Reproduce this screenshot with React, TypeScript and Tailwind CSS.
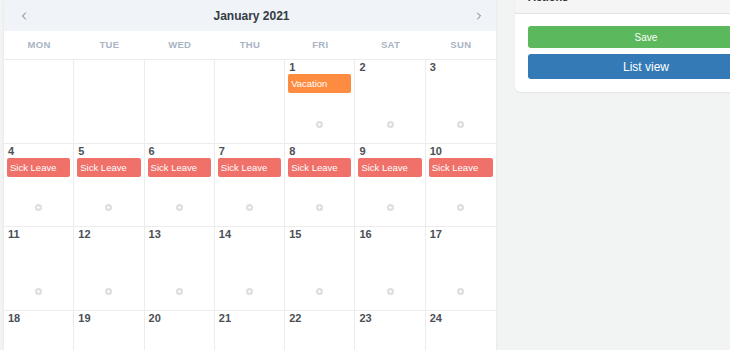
import { ChevronLeft, ChevronRight } from 'lucide-react';

type Event = { label: string; kind: 'vacation' | 'sick' };

const dayNames = ['MON', 'TUE', 'WED', 'THU', 'FRI', 'SAT', 'SUN'];

const weeks: (number | null)[][] = [
  [null, null, null, null, 1, 2, 3],
  [4, 5, 6, 7, 8, 9, 10],
  [11, 12, 13, 14, 15, 16, 17],
  [18, 19, 20, 21, 22, 23, 24],
];

const events: Record<number, Event> = {
  1: { label: 'Vacation', kind: 'vacation' },
  4: { label: 'Sick Leave', kind: 'sick' },
  5: { label: 'Sick Leave', kind: 'sick' },
  6: { label: 'Sick Leave', kind: 'sick' },
  7: { label: 'Sick Leave', kind: 'sick' },
  8: { label: 'Sick Leave', kind: 'sick' },
  9: { label: 'Sick Leave', kind: 'sick' },
  10: { label: 'Sick Leave', kind: 'sick' },
};

function AddDot() {
  return (
    <svg width="7" height="7" viewBox="0 0 7 7" className="block">
      <circle cx="3.5" cy="3.5" r="3.5" fill="#dedede" />
      <path d="M3.5 1.8v3.4M1.8 3.5h3.4" stroke="#ffffff" strokeWidth="1" />
    </svg>
  );
}

function DayCell({ day, last }: { day: number | null; last: boolean }) {
  const ev = day ? events[day] : undefined;
  return (
    <div className={`flex flex-col h-full ${last ? '' : 'border-r border-[#ececec]'}`}>
      {day && (
        <>
          <div className="pl-[4px] pt-[1px] text-[11px] leading-[12px] font-bold text-[#4b4f56]">{day}</div>
          {ev && (
            <div
              className={`mx-[3px] mt-[1px] h-[19px] rounded-[2px] px-[3px] text-[9.5px] leading-[19px] text-white ${
                ev.kind === 'vacation' ? 'bg-[#fd8b40]' : 'bg-[#f0716a]'
              }`}
            >
              {ev.label}
            </div>
          )}
          <div className="mt-auto mb-[15px] self-center">
            <AddDot />
          </div>
        </>
      )}
    </div>
  );
}

export default function App() {
  return (
    <div
      className="h-[350px] w-[730px] overflow-hidden bg-[#f2f3f3] flex items-start"
      style={{ fontFamily: '"Liberation Sans", Arial, sans-serif' }}
    >
      <div className="ml-[4px] mt-[-3px] w-[492px] shrink-0 rounded-md bg-white shadow-[0_1px_3px_rgba(0,0,0,0.08)] overflow-hidden">
        <div className="h-[34px] bg-[#f0f3f7] flex items-center justify-between pl-[14px] pr-[11px] pt-[3px]">
          <ChevronLeft size={12} strokeWidth={2} className="text-[#6d7785]" />
          <div className="text-[12px] font-bold text-[#353b45]">January 2021</div>
          <ChevronRight size={12} strokeWidth={2} className="text-[#6d7785]" />
        </div>
        <div className="grid grid-cols-7 h-[29px] border-b border-[#ececec]">
          {dayNames.map((d) => (
            <div key={d} className="flex items-center justify-center text-[9.5px] font-bold tracking-[0.3px] text-[#a9b4c4]">
              {d}
            </div>
          ))}
        </div>
        {weeks.map((week, wi) => (
          <div key={wi} className="grid grid-cols-7 h-[83.5px] border-b border-[#ececec]">
            {week.map((day, di) => (
              <DayCell key={di} day={day} last={di === 6} />
            ))}
          </div>
        ))}
      </div>

      <div className="ml-[19px] mt-[-21px] w-[262px] shrink-0 rounded-md bg-white shadow-[0_1px_2px_rgba(0,0,0,0.06)] overflow-hidden">
        <div className="h-[35px] bg-[#f5f5f5] border-b border-[#e3e3e3] flex items-end pb-[10px] px-[13px] text-[11px] leading-[11px] font-bold text-[#333]">
          Actions
        </div>
        <div className="px-[13px] pt-[12px] pb-[13px] flex flex-col gap-[6px]">
          <button className="h-[22px] rounded-[3px] bg-[#5cb85c] text-white text-[10px]">Save</button>
          <button className="h-[25px] rounded-[3px] bg-[#337ab7] text-white text-[12px]">List view</button>
        </div>
      </div>
    </div>
  );
}
